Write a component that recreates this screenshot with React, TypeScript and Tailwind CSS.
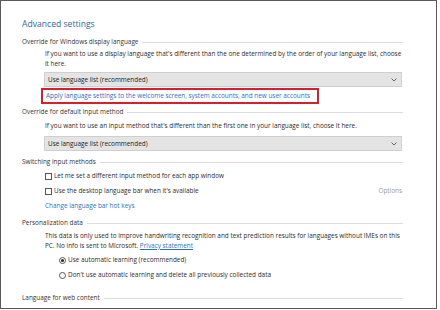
import React from "react";

const Header = ({ title, className = "" }: { title: string; className?: string }) => (
  <div className={`flex items-center h-[12px] w-[381px] ${className}`}>
    <span className="text-[#333] whitespace-nowrap">{title}</span>
    <div className="flex-1 ml-[4px] h-px bg-[#dcdcdc]" />
  </div>
);

const Dropdown = ({ className = "" }: { className?: string }) => (
  <div
    className={`flex items-center justify-between w-[358px] h-[15px] ml-[22px] px-[3px] bg-[#e4e4e4] border border-[#cfcfcf] ${className}`}
  >
    <span className="text-[#222]">Use language list (recommended)</span>
    <svg width="6" height="4" viewBox="0 0 6 4" className="mr-[1px]">
      <path d="M0.5 0.5 L3 3 L5.5 0.5" fill="none" stroke="#555" strokeWidth="0.9" />
    </svg>
  </div>
);

const Checkbox = ({ label, className = "" }: { label: string; className?: string }) => (
  <div className={`flex items-center h-[12px] ml-[23px] ${className}`}>
    <div className="w-[7px] h-[7px] border border-[#555] bg-white" />
    <span className="ml-[2px] text-[#2b2b2b]">{label}</span>
  </div>
);

const Radio = ({ label, checked, className = "" }: { label: string; checked?: boolean; className?: string }) => (
  <div className={`flex items-center h-[12px] ml-[37px] ${className}`}>
    <div className="w-[7px] h-[7px] rounded-full border border-[#555] bg-white flex items-center justify-center">
      {checked && <div className="w-[3px] h-[3px] rounded-full bg-[#222]" />}
    </div>
    <span className="ml-[2px] text-[#2b2b2b]">{label}</span>
  </div>
);

export default function App() {
  return (
    <div className="w-[440px] h-[310px] bg-white">
      <div
        className="w-[437px] h-[309px] border border-[#5a5a5a] pt-[13px] pl-[21px] text-[6.4px] overflow-hidden whitespace-nowrap"
        style={{ fontFamily: '"Open Sans", "Noto Sans", sans-serif' }}
      >
        <div className="h-[20px] leading-[20px] text-[8.6px] text-[#2f66a3]">Advanced settings</div>

        <Header title="Override for Windows display language" className="mt-[2px]" />
        <div className="mt-[1px] ml-[23px] leading-[10px] text-[#2b2b2b]">
          <div>If you want to use a display language that's different than the one determined by the order of your language list, choose</div>
          <div>it here.</div>
        </div>
        <Dropdown className="mt-[3px]" />
        <div className="mt-[1px] ml-[19px] w-[278px] h-[16px] border-2 border-[#d8202c] flex items-center pl-[3px]">
          <span className="text-[#2a72c0]">
            Apply language settings to the welcome screen, system accounts, and new user accounts
          </span>
        </div>

        <Header title="Override for default input method" className="mt-[2px]" />
        <div className="mt-[3px] ml-[23px] leading-[10px] text-[#2b2b2b]">
          If you want to use an input method that's different than the first one in your language list, choose it here.
        </div>
        <Dropdown className="mt-[5px]" />

        <Header title="Switching input methods" className="mt-[5px]" />
        <Checkbox label="Let me set a different input method for each app window" className="mt-[2px]" />
        <div className="flex items-center w-[380px] mt-[3px]">
          <Checkbox label="Use the desktop language bar when it's available" />
          <span className="ml-auto text-[#9a9a9a]">Options</span>
        </div>
        <div className="mt-[3px] h-[12px] leading-[12px] ml-[23px] text-[#2a72c0]">Change language bar hot keys</div>

        <Header title="Personalization data" className="mt-[5px]" />
        <div className="mt-[2px] ml-[23px] leading-[10px] text-[#2b2b2b]">
          <div>This data is only used to improve handwriting recognition and text prediction results for languages without IMEs on this</div>
          <div>
            PC. No info is sent to Microsoft. <span className="text-[#2a72c0] underline">Privacy statement</span>
          </div>
        </div>
        <Radio label="Use automatic learning (recommended)" checked className="mt-[3px]" />
        <Radio label="Don't use automatic learning and delete all previously collected data" className="mt-[3px]" />

        <Header title="Language for web content" className="mt-[11px]" />
      </div>
    </div>
  );
}
